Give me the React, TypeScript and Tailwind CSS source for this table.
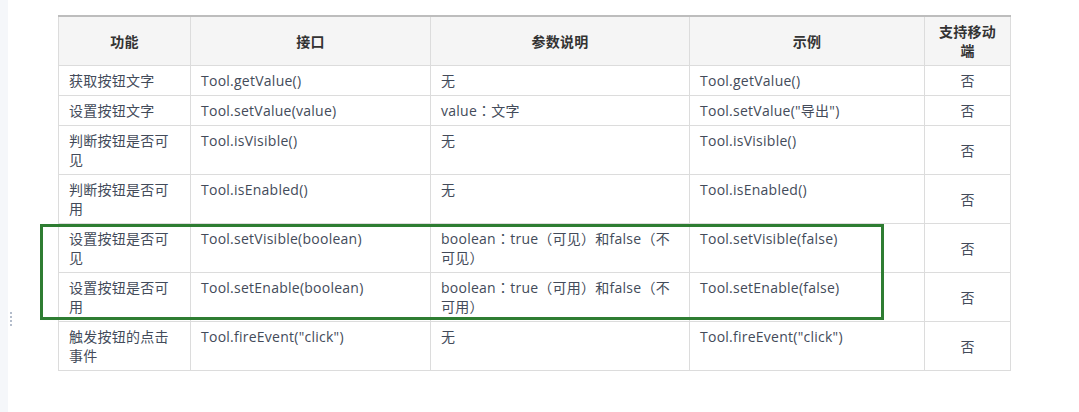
import type { ReactNode } from 'react'

// ─── 表格数据 ───────────────────────────────────────

interface Row {
  name: ReactNode
  api: string
  params: ReactNode
  example: string
}

// 全角冒号用繁体字形（居中）
const Colon = () => <span style={{ fontFamily: '"Noto Sans CJK TC", sans-serif' }}>：</span>

const ROWS: Row[] = [
  { name: '获取按钮文字', api: 'Tool.getValue()', params: '无', example: 'Tool.getValue()' },
  { name: '设置按钮文字', api: 'Tool.setValue(value)', params: <>value<Colon />文字</>, example: 'Tool.setValue("导出")' },
  { name: <>判断按钮是否可<br />见</>, api: 'Tool.isVisible()', params: '无', example: 'Tool.isVisible()' },
  { name: <>判断按钮是否可<br />用</>, api: 'Tool.isEnabled()', params: '无', example: 'Tool.isEnabled()' },
  {
    name: <>设置按钮是否可<br />见</>,
    api: 'Tool.setVisible(boolean)',
    params: <>boolean<Colon />true（可见）和false（不<br />可见）</>,
    example: 'Tool.setVisible(false)',
  },
  {
    name: <>设置按钮是否可<br />用</>,
    api: 'Tool.setEnable(boolean)',
    params: <>boolean<Colon />true（可用）和false（不<br />可用）</>,
    example: 'Tool.setEnable(false)',
  },
  { name: <>触发按钮的点击<br />事件</>, api: 'Tool.fireEvent("click")', params: '无', example: 'Tool.fireEvent("click")' },
]

const th = 'border border-[#dcdcdc] border-t-2 border-t-[#bdbdbd] bg-[#f5f5f5] px-[10px] py-[5px] text-center align-middle font-bold text-[#333]'
const td = 'border border-[#dcdcdc] px-[10px] py-[5px] align-top'

export default function App() {
  return (
    <div
      className="relative flex h-[412px] w-[1079px] overflow-hidden bg-white text-[14px] leading-[19px] tracking-[0.25px] text-[#434b5a]"
      style={{ fontFamily: '"Open Sans", "Noto Sans CJK SC", sans-serif' }}
    >
      {/* 左侧栏 */}
      <div className="w-2 shrink-0 bg-[#f5f7fa]" />
      <div className="absolute left-[10px] top-[312px] flex flex-col gap-[2px]">
        {[0, 1, 2, 3].map((i) => (
          <span key={i} className="h-[2px] w-[2px] bg-[#b3bccb]" />
        ))}
      </div>

      {/* 表格 */}
      <div className="pl-[50px] pt-[15px]">
        <table className="w-[952px] table-fixed border-collapse">
          <colgroup>
            <col className="w-[132px]" />
            <col className="w-[240px]" />
            <col className="w-[259px]" />
            <col className="w-[235px]" />
            <col className="w-[86px]" />
          </colgroup>
          <thead>
            <tr>
              <th className={th}>功能</th>
              <th className={th}>接口</th>
              <th className={th}>参数说明</th>
              <th className={th}>示例</th>
              <th className={th}>支持移动<br />端</th>
            </tr>
          </thead>
          <tbody>
            {ROWS.map((r) => (
              <tr key={r.api}>
                <td className={td}>{r.name}</td>
                <td className={td}>{r.api}</td>
                <td className={td}>{r.params}</td>
                <td className={td}>{r.example}</td>
                <td className="border border-[#dcdcdc] px-[10px] py-[5px] text-center align-middle">否</td>
              </tr>
            ))}
          </tbody>
        </table>
      </div>

      {/* 标注框 */}
      <div className="pointer-events-none absolute left-[40px] top-[224px] h-[96px] w-[844px] border-[3px] border-[#2e7d32]" />
    </div>
  )
}
